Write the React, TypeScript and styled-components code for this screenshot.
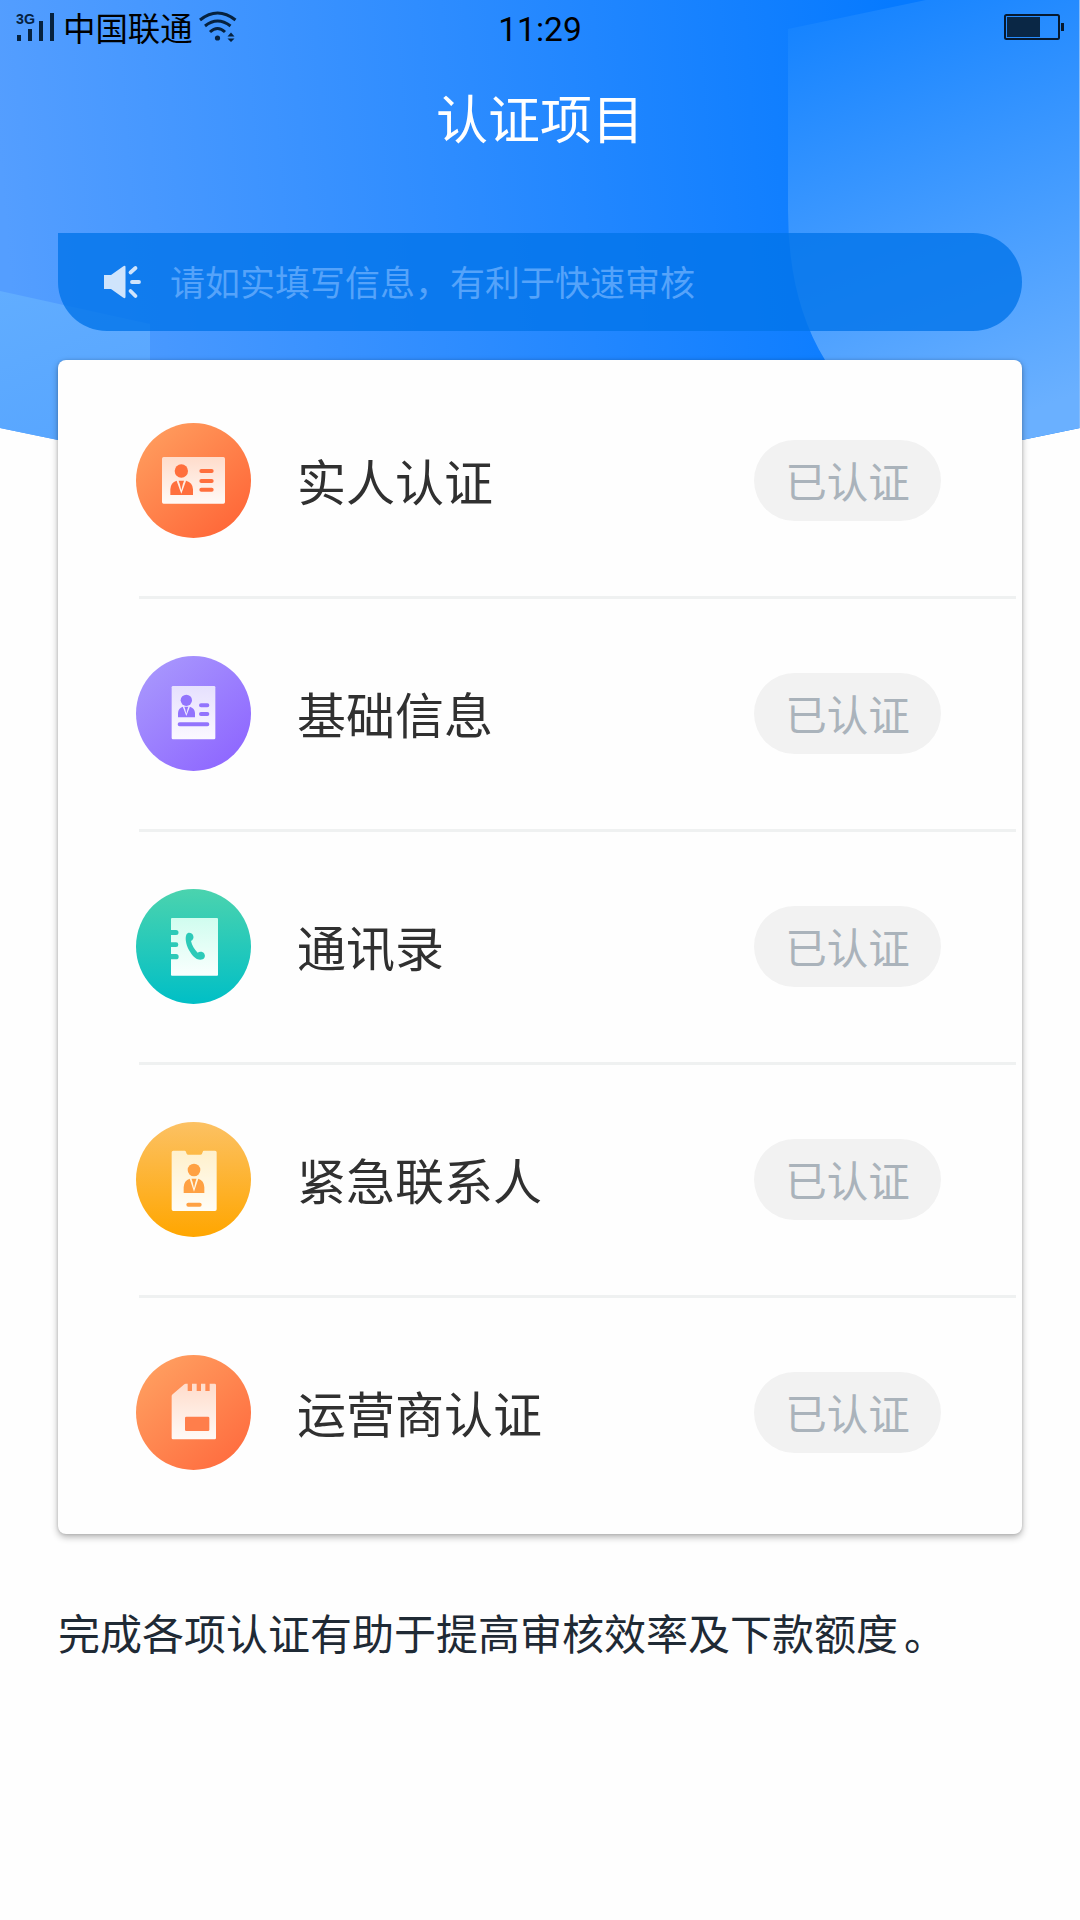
import React from "react";
import styled, { createGlobalStyle } from "styled-components";

const GlobalStyle = createGlobalStyle`
  body {
    margin: 0;
    background: #fefefe;
    font-family: "Noto Sans CJK SC", "Noto Sans", sans-serif;
  }
`;

const Page = styled.div`
  display: grid;
  grid-template-columns: 1080px;
  width: 1080px;
  height: 1920px;
  overflow: hidden;
  background: #fefefe;
`;

const Backdrop = styled.svg`
  grid-area: 1 / 1;
  display: block;
  width: 1080px;
  height: 660px;
`;

const Content = styled.div`
  grid-area: 1 / 1;
  display: flex;
  flex-direction: column;
  z-index: 1;
`;

const StatusBar = styled.div`
  display: grid;
  grid-template-columns: 1fr auto 1fr;
  align-items: center;
  height: 54px;
  padding: 0 16px;
  box-sizing: border-box;
  color: #04101f;
`;

const StatusLeft = styled.div`
  display: flex;
  align-items: center;
`;

const StatusIcon = styled.svg`
  display: block;
  flex: none;
`;

const Carrier = styled.span`
  margin: 0 6px 0 7px;
  padding-bottom: 1px;
  font-size: 32.4px;
  line-height: 50px;
  color: #000;
`;

const Clock = styled.span`
  padding-top: 6px;
  font-family: Roboto, sans-serif;
  font-size: 33.5px;
  line-height: 48px;
  color: #000;
`;

const StatusRight = styled.div`
  display: flex;
  justify-content: flex-end;
`;

const Title = styled.h1`
  margin: 0;
  height: 126px;
  line-height: 126px;
  text-align: center;
  font-size: 52px;
  font-weight: 400;
  color: #fff;
`;

const Notice = styled.div`
  display: flex;
  align-items: center;
  gap: 29px;
  height: 98px;
  margin: 53px 58px 29px;
  padding-left: 46px;
  box-sizing: border-box;
  border-radius: 0 49px 49px 49px;
  background: rgba(2, 116, 234, 0.8);
`;

const NoticeText = styled.span`
  padding-bottom: 2px;
  font-size: 35px;
  line-height: 50px;
  color: #55a3fa;
`;

const Card = styled.div`
  display: flex;
  flex-direction: column;
  margin: 0 58px;
  padding: 6px;
  border-radius: 8px;
  background: #fefefe;
  box-shadow: 0 3px 7px rgba(0, 0, 0, 0.3), 0 0 3px rgba(0, 0, 0, 0.14);
`;

const Row = styled.div`
  display: flex;
  align-items: center;
  height: 230px;
  padding: 0 75px 1px 72px;
  box-sizing: border-box;
`;

const Divider = styled.div`
  height: 3px;
  margin-left: 75px;
  background: #eff1f1;
`;

const RowIcon = styled.svg`
  display: block;
  flex: none;
  width: 115px;
  height: 115px;
`;

const RowLabel = styled.span`
  flex: 1;
  margin-left: 46px;
  padding-bottom: 2px;
  font-size: 49px;
  line-height: 80px;
  color: #303030;
`;

const Badge = styled.span`
  width: 187px;
  height: 81px;
  border-radius: 41px;
  text-align: center;
  font-size: 41.5px;
  line-height: 80px;
  color: #aab3bb;
  background: #f2f2f2;
`;

const Footnote = styled.p`
  margin: 68px 58px 0;
  font-size: 42px;
  line-height: 60px;
  color: #1f2a35;
  white-space: nowrap;
`;

const FullStop = styled.span`
  margin-left: 6px;
`;

type GradientProps = { id: string; from: string; to: string; diagonal?: boolean };

const Gradient = ({ id, from, to, diagonal }: GradientProps) => (
  <linearGradient id={id} x1={diagonal ? 0.15 : 0} y1={diagonal ? 0.1 : 0} x2={diagonal ? 0.85 : 0} y2={diagonal ? 0.9 : 1}>
    <stop offset="0" stopColor={from} />
    <stop offset="1" stopColor={to} />
  </linearGradient>
);

type PersonProps = { cx: number; cy: number; r: number; left: number; right: number; top: number; bottom: number; fill: string };

const Person = ({ cx, cy, r, left, right, top, bottom, fill }: PersonProps) => {
  const w = (right - left) / 2;
  const h = bottom - top;
  return (
    <g fill={fill}>
      <circle cx={cx} cy={cy} r={r} />
      <path
        d={`M${left} ${bottom} V${top + h * 0.6} Q${left + 1} ${top + h * 0.12} ${cx - w * 0.42} ${top} L${cx} ${bottom - 4} L${cx + w * 0.42} ${top} Q${right - 1} ${top + h * 0.12} ${right} ${top + h * 0.6} V${bottom} Z`}
      />
      <path d={`M${cx - w * 0.24} ${top} H${cx + w * 0.24} L${cx + w * 0.13} ${top + h * 0.25} L${cx} ${top + h * 0.66} L${cx - w * 0.13} ${top + h * 0.25} Z`} />
    </g>
  );
};

const Circle = ({ name }: { name: string }) => <circle cx="172.5" cy="172.5" r="172.5" fill={`url(#${name})`} />;

const IdCardIcon = () => (
  <RowIcon viewBox="0 0 345 345">
    <defs>
      <Gradient id="idBg" from="#ff9a5c" to="#ff6839" diagonal />
      <Gradient id="idFg" from="#ffdccb" to="#fffaf7" />
    </defs>
    <Circle name="idBg" />
    <rect x="78" y="102" width="189" height="140" rx="5" fill="url(#idFg)" />
    <Person cx={136} cy={144} r={20} left={103} right={171} top={173} bottom={216} fill="#ff6f3d" />
    <path d="M196 144H227M196 174H227M196 200H227" stroke="#ff6f3d" strokeWidth="12" strokeLinecap="round" />
  </RowIcon>
);

const ProfileIcon = () => (
  <RowIcon viewBox="0 0 345 345">
    <defs>
      <Gradient id="profileBg" from="#a795fd" to="#8f68ff" diagonal />
      <Gradient id="profileFg" from="#e6e0fe" to="#fbf9ff" />
    </defs>
    <Circle name="profileBg" />
    <rect x="107" y="90" width="131" height="160" rx="4" fill="url(#profileFg)" />
    <Person cx={151} cy={133} r={17} left={126} right={177} top={152} bottom={184} fill="#9274fd" />
    <path d="M195 148H214M195 174H214M131 205H214" stroke="#9274fd" strokeWidth="12" strokeLinecap="round" />
  </RowIcon>
);

const ContactsIcon = () => (
  <RowIcon viewBox="0 0 345 345">
    <defs>
      <Gradient id="contactsBg" from="#4bd3ae" to="#00bfc6" />
      <Gradient id="contactsFg" from="#d0fdef" to="#fafffe" />
    </defs>
    <Circle name="contactsBg" />
    <rect x="105" y="87" width="141" height="173" rx="3" fill="url(#contactsFg)" />
    <g fill="#2ccab8">
      <path d="M104 123H120a7.5 7.5 0 0 1 0 15H104zM104 160H120a7 7 0 0 1 0 14H104zM104 195H120a8 8 0 0 1 0 16H104z" />
      <path d="M156 132C162 130 170 134 172 141C174 148 170 154 165 156C168 170 175 181 185 191C191 187 201 188 205 194C209 201 206 208 200 211C188 216 174 208 163 190C151 171 147 152 150 140Q151 134 156 132Z" />
    </g>
  </RowIcon>
);

const BadgeCardIcon = () => (
  <RowIcon viewBox="0 0 345 345">
    <defs>
      <Gradient id="badgeBg" from="#fcc163" to="#ffa600" />
      <Gradient id="badgeFg" from="#fff0cb" to="#fffdf7" />
    </defs>
    <Circle name="badgeBg" />
    <path d="M112 86H146Q149 86 150 90L152 95Q153 98 157 98H193Q197 98 198 95L200 90Q201 86 204 86H237Q242 86 242 91V262Q242 267 237 267H112Q107 267 107 262V91Q107 86 112 86Z" fill="url(#badgeFg)" />
    <Person cx={174} cy={144} r={19} left={143} right={205} top={170} bottom={213} fill="#ffa143" />
    <path d="M157 248H191" stroke="#ffa143" strokeWidth="12" strokeLinecap="round" />
  </RowIcon>
);

const SimCardIcon = () => (
  <RowIcon viewBox="0 0 345 345">
    <defs>
      <Gradient id="simBg" from="#ff9d5f" to="#ff6e40" diagonal />
      <Gradient id="simFg" from="#ffdccb" to="#fffaf7" />
    </defs>
    <Circle name="simBg" />
    <path
      d="M149 86H155V108H168V86H182V108H195V86H208V108H221V86H236Q240 86 240 90V249Q240 253 236 253H111Q107 253 107 249V123Q107 120 110 118L145 88Q147 86 149 86Z"
      fill="url(#simFg)"
    />
    <rect x="147" y="185" width="73" height="43" rx="4" fill="#ff7e4b" />
  </RowIcon>
);

const items = [
  { label: "实人认证", Icon: IdCardIcon },
  { label: "基础信息", Icon: ProfileIcon },
  { label: "通讯录", Icon: ContactsIcon },
  { label: "紧急联系人", Icon: BadgeCardIcon },
  { label: "运营商认证", Icon: SimCardIcon },
];

const HeaderBackdrop = () => (
  <Backdrop viewBox="0 0 1080 660">
    <defs>
      <linearGradient id="sky" gradientUnits="userSpaceOnUse" x1="0" y1="160" x2="900" y2="90">
        <stop offset="0" stopColor="#549eff" />
        <stop offset="1" stopColor="#067aff" />
      </linearGradient>
      <linearGradient id="rightGlow" gradientUnits="userSpaceOnUse" x1="820" y1="0" x2="980" y2="430">
        <stop offset="0" stopColor="#1382ff" />
        <stop offset="1" stopColor="#6ab0ff" />
      </linearGradient>
      <linearGradient id="leftGlow" gradientUnits="userSpaceOnUse" x1="0" y1="291" x2="60" y2="440">
        <stop offset="0" stopColor="#61adff" />
        <stop offset="1" stopColor="#58a6ff" />
      </linearGradient>
      <clipPath id="headerShape">
        <path d="M0 0H1080V428L1022 440Q540 540 58 440L0 428Z" />
      </clipPath>
    </defs>
    <g clipPath="url(#headerShape)">
      <rect width="1080" height="660" fill="url(#sky)" />
      <path d="M0 291L150 324V660H0Z" fill="url(#leftGlow)" />
      <path d="M788 29L926 0H1079V660H1000Q880 450 825 360Q788 300 788 210Z" fill="url(#rightGlow)" />
      <rect x="1079" width="1" height="660" fill="#84bbfb" />
    </g>
  </Backdrop>
);

const SignalIcon = () => (
  <StatusIcon width="40" height="32" viewBox="0 0 40 32">
    <text x="0" y="13" fontFamily="Liberation Sans, sans-serif" fontSize="15.5" fontWeight="700" textLength="19" lengthAdjust="spacingAndGlyphs" fill="#06223f">
      3G
    </text>
    <path d="M1 24h4v6h-4zM12 18h4v12h-4zM23 10h4v20h-4zM34 2h4v28h-4z" fill="#06223f" />
  </StatusIcon>
);

const WifiIcon = () => (
  <StatusIcon width="38" height="32" viewBox="0 0 38 32">
    <g fill="none" stroke="#06223f" strokeWidth="3">
      <path d="M1 9Q18.500 -5 36.500 9" />
      <path d="M6 15Q18.500 5 31.500 15" />
      <path d="M11 21Q18.500 14 26 21" />
    </g>
    <g fill="#06223f">
      <circle cx="18.500" cy="27" r="2.600" />
      <path d="M28.500 25.500L32 21.500L35.500 25.500ZM28.500 27.500H35.500L32 31Z" />
    </g>
  </StatusIcon>
);

const BatteryIcon = () => (
  <StatusIcon width="60" height="30" viewBox="0 0 60 30">
    <rect x="1" y="3" width="54" height="24" rx="1.500" fill="none" stroke="#06192f" strokeWidth="2" />
    <rect x="3" y="5" width="33" height="20" fill="#0a2745" />
    <rect x="57" y="11" width="3" height="8" fill="#06192f" />
  </StatusIcon>
);

const HornIcon = () => (
  <StatusIcon width="37" height="34" viewBox="0 0 37 34">
    <path d="M0 10H7L19 1.500Q21.500 0 21.500 2V32Q21.500 34 19 32.500L7 24H0Z" fill="#cfe4fc" />
    <path d="M26.500 7.500L31.500 3M28 17H35M26.500 26L31.500 31" stroke="#cfe4fc" strokeWidth="3.800" strokeLinecap="round" />
  </StatusIcon>
);

export default function App() {
  return (
    <>
      <GlobalStyle />
      <Page>
        <HeaderBackdrop />
        <Content>
          <StatusBar>
            <StatusLeft>
              <SignalIcon />
              <Carrier>中国联通</Carrier>
              <WifiIcon />
            </StatusLeft>
            <Clock>11:29</Clock>
            <StatusRight>
              <BatteryIcon />
            </StatusRight>
          </StatusBar>
          <Title>认证项目</Title>
          <Notice>
            <HornIcon />
            <NoticeText>请如实填写信息，有利于快速审核</NoticeText>
          </Notice>
          <Card>
            {items.map(({ label, Icon }, index) => (
              <React.Fragment key={label}>
                {index > 0 && <Divider />}
                <Row>
                  <Icon />
                  <RowLabel>{label}</RowLabel>
                  <Badge>已认证</Badge>
                </Row>
              </React.Fragment>
            ))}
          </Card>
          <Footnote>
            完成各项认证有助于提高审核效率及下款额度<FullStop>。</FullStop>
          </Footnote>
        </Content>
      </Page>
    </>
  );
}
